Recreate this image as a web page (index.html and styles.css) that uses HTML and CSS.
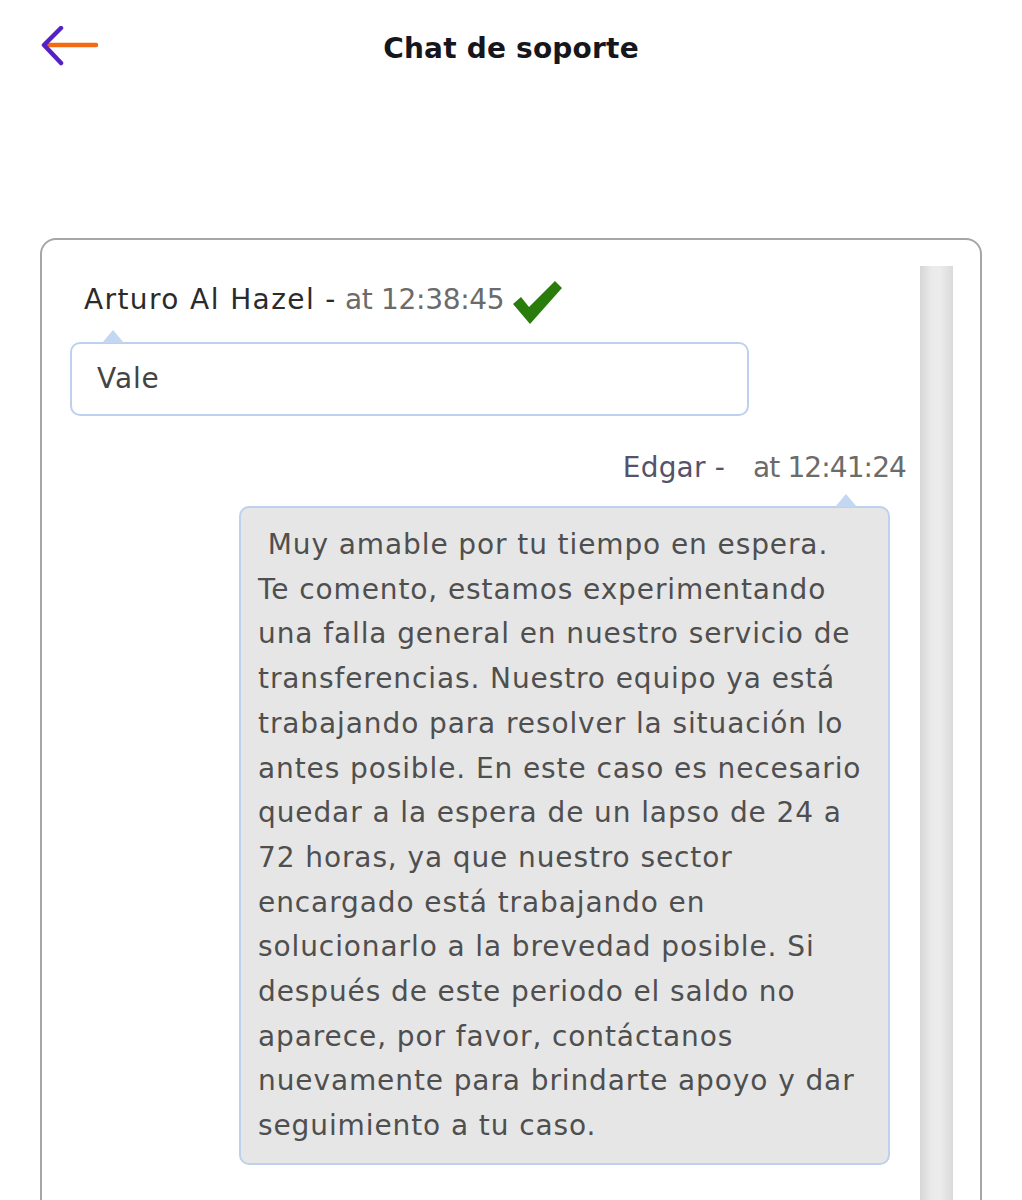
FILE: index.html
```html
<!DOCTYPE html>
<html lang="es">
<head>
<meta charset="utf-8">
<title>Chat de soporte</title>
<link rel="stylesheet" href="styles.css">
</head>
<body>
<header class="topbar">
  <a class="back" href="#" aria-label="Volver">
    <svg width="60" height="42" viewBox="0 0 60 42">
      <line x1="6" y1="19" x2="56" y2="19" stroke="#f26b12" stroke-width="4.5" stroke-linecap="round"/>
      <polyline points="21,2 4,19 21,37" fill="none" stroke="#5520c4" stroke-width="4.5" stroke-linecap="round" stroke-linejoin="round"/>
    </svg>
  </a>
  <h1 class="title">Chat de soporte</h1>
  <span class="spacer"></span>
</header>

<main class="card">
  <section class="messages">
    <div class="msg msg-in">
      <div class="meta">
        <span class="name">Arturo Al Hazel -</span>
        <span class="time">at 12:38:45</span>
        <svg class="check" width="50" height="46" viewBox="0 0 50 46">
          <path d="M1 25 L9 18 L17 28 L43 2 L50 9 L18 45 Z" fill="#2a7d0c"/>
        </svg>
      </div>
      <div class="bubble bubble-in">Vale</div>
    </div>

    <div class="msg msg-out">
      <div class="meta meta-out">
        <span class="name name-out">Edgar -</span>
        <span class="time time-out">at 12:41:24</span>
      </div>
      <div class="bubble bubble-out">&nbsp;Muy amable por tu tiempo en espera. Te comento, estamos experimentando una falla general en nuestro servicio de transferencias. Nuestro equipo ya está trabajando para resolver la situación lo antes posible. En este caso es necesario quedar a la espera de un lapso de 24 a 72 horas, ya que nuestro sector encargado está trabajando en solucionarlo a la brevedad posible. Si después de este periodo el saldo no aparece, por favor, contáctanos nuevamente para brindarte apoyo y dar seguimiento a tu caso.</div>
    </div>
  </section>
  <div class="scrollbar"></div>
</main>
</body>
</html>
```

FILE: styles.css
```css
* { box-sizing: border-box; }

html, body {
  margin: 0;
  padding: 0;
  background: #ffffff;
  overflow: hidden;
}

body {
  font-family: "DejaVu Sans", "Noto Sans", sans-serif;
  color: #333;
  height: 1200px;
}

.topbar {
  display: grid;
  grid-template-columns: 1fr auto 1fr;
  align-items: center;
  height: 96px;
  padding: 0 40px;
}

.back {
  display: flex;
  align-items: center;
  width: 60px;
  height: 42px;
  margin-top: -3px;
}

.title {
  margin: 0;
  font-size: 28px;
  font-weight: 700;
  color: #16161c;
  letter-spacing: 0.2px;
}

.card {
  margin: 142px 40px 0;
  height: 1100px;
  border: 2px solid #a6a6a6;
  border-radius: 16px;
  display: flex;
  padding: 26px 27px 0 28px;
  gap: 14px;
}

.messages {
  flex: 1;
  display: flex;
  flex-direction: column;
}

.scrollbar {
  width: 33px;
  height: 1000px;
  background: linear-gradient(to right, #d6d6d6 0%, #eaeaea 35%, #ececec 60%, #dadada 100%);
}

.msg { display: flex; flex-direction: column; }

.meta {
  display: flex;
  align-items: center;
  font-size: 28px;
  line-height: 36px;
  white-space: nowrap;
}

.msg-in .meta {
  padding-left: 14px;
  height: 44px;
  margin-top: 12px;
}

.name { color: #2b2b2b; letter-spacing: 1.4px; }
.time { color: #6b6b6b; margin-left: 8px; letter-spacing: -0.3px; }
.name-out { color: #55536b; letter-spacing: 0.2px; }
.time-out { margin-left: 28px; letter-spacing: -0.9px; }

.check { margin-left: 8px; margin-top: 4px; }

.bubble {
  position: relative;
  border: 2px solid #bdd1ee;
  border-radius: 10px;
  font-size: 28px;
  letter-spacing: 0.9px;
}

.bubble::before {
  content: "";
  position: absolute;
  top: -14px;
  width: 0;
  height: 0;
  border-left: 11px solid transparent;
  border-right: 11px solid transparent;
  border-bottom: 13px solid #c3d6f2;
}

.bubble-in {
  margin-top: 20px;
  width: 679px;
  height: 74px;
  padding: 17px 25px;
  line-height: 36px;
  color: #444;
  background: #fff;
}
.bubble-in::before { left: 30px; }

.msg-out { align-items: flex-end; margin-top: 32px; }

.meta-out {
  justify-content: flex-end;
  height: 40px;
}

.bubble-out {
  margin-top: 18px;
  margin-right: 16px;
  width: 651px;
  padding: 15px 23px 14px 17px;
  line-height: 44.7px;
  background: #e6e6e6;
  color: #4f4f4f;
}
.bubble-out::before { right: 31px; }
```
